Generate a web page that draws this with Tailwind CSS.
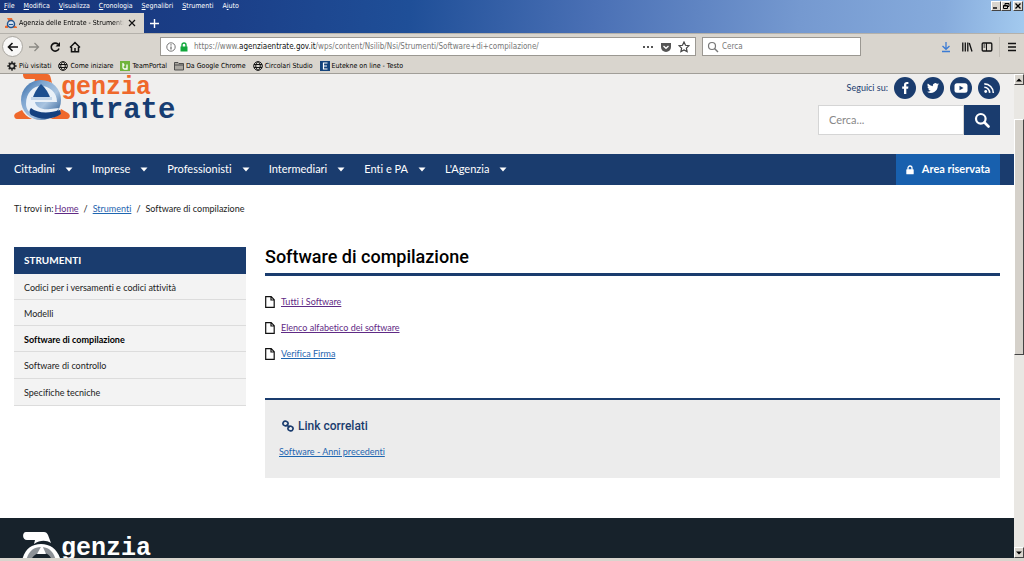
<!DOCTYPE html>
<html lang="it">
<head>
<meta charset="utf-8">
<meta name="viewport" content="width=device-width, initial-scale=1">
<title>Agenzia delle Entrate - Strumenti</title>
<script src="https://cdn.jsdelivr.net/npm/@tailwindcss/browser@4"></script>
</head>
<body class="h-screen flex flex-col overflow-hidden bg-[#d9d5ce] font-['DejaVu_Sans_Condensed','DejaVu_Sans',sans-serif] text-[7px] text-black">

<!-- Menu bar and tabs -->
<div class="shrink-0 bg-[linear-gradient(95deg,#16347a_0%,#1b3f88_22%,#1f4f98_40%,#4a70b5_58%,#7599d0_78%,#86abdc_92%,#a3caef_100%)]">
  <div class="flex justify-between h-[13px]">
    <nav class="flex items-center gap-[9px] pl-1 text-white" aria-label="Menu">
      <button><u>F</u>ile</button>
      <button><u>M</u>odifica</button>
      <button><u>V</u>isualizza</button>
      <button><u>C</u>ronologia</button>
      <button><u>S</u>egnalibri</button>
      <button><u>S</u>trumenti</button>
      <button>A<u>i</u>uto</button>
    </nav>
    <div class="flex pt-px pr-px">
      <button aria-label="Riduci a icona" class="w-[10px] h-[10px] bg-[#d9d5ce] border border-t-white border-l-white border-r-[#444] border-b-[#444]"><svg viewBox="0 0 8 8" class="block size-2"><path d="M1 6h4" stroke="#000" stroke-width="1.4"/></svg></button>
      <button aria-label="Ripristina" class="w-[10px] h-[10px] bg-[#d9d5ce] border border-t-white border-l-white border-r-[#444] border-b-[#444]"><svg viewBox="0 0 8 8" class="block size-2"><path d="M3 3V1.500h4v3H5.500M1.500 3.500h4v3h-4zM1.500 4h4M3 1.700h4" fill="none" stroke="#000"/></svg></button>
      <button aria-label="Chiudi finestra" class="ml-[2px] w-[10px] h-[10px] bg-[#d9d5ce] border border-t-white border-l-white border-r-[#444] border-b-[#444]"><svg viewBox="0 0 8 8" class="block size-2"><path d="M1.500 1.500l5 5M6.500 1.500l-5 5" stroke="#000" stroke-width="1.300"/></svg></button>
    </div>
  </div>
  <div class="flex h-5">
    <div class="flex items-center w-36 bg-[#d9d5ce] pl-[5px]">
      <svg viewBox="0 0 12 12" class="size-3 mr-[2px] shrink-0"><path d="M2 1h5l1 3-4 1zM0 9l3-1v3H0zM9 8l3 2v1H8z" fill="#ee6a2d"/><circle cx="6" cy="7" r="3.500" fill="#dfe9f4" stroke="#24568f" stroke-width="1.500"/><path d="M4 7.500h4" stroke="#24568f" stroke-width="1.200"/></svg>
      <span class="w-[105px] overflow-hidden whitespace-nowrap mask-r-from-90%">Agenzia delle Entrate - Strumenti</span>
      <button aria-label="Chiudi scheda" class="ml-1"><svg viewBox="0 0 8 8" class="size-2"><path d="M1 1l6 6M7 1L1 7" stroke="#111" stroke-width="1.200"/></svg></button>
    </div>
    <button aria-label="Nuova scheda" class="ml-[6px]"><svg viewBox="0 0 9 9" class="size-[9px]"><path d="M4.500 0v9M0 4.500h9" stroke="#fff" stroke-width="1.400"/></svg></button>
  </div>
</div>

<!-- Toolbar -->
<div class="shrink-0 flex items-center h-[26px] border-t border-[#b4b1ab] text-[8px]">
  <div class="flex items-center w-40 pl-[2px]">
    <button aria-label="Indietro" class="flex items-center justify-center size-[21px] rounded-full bg-[#f8f7f6] border border-[#aaa7a1]"><svg viewBox="0 0 12 12" class="size-3"><path d="M11 6H1.500M5.500 2l-4 4 4 4" fill="none" stroke="#111" stroke-width="1.600"/></svg></button>
    <button aria-label="Avanti" class="ml-[5px]"><svg viewBox="0 0 12 12" class="size-3"><path d="M1 6h9.500M6.500 2l4 4-4 4" fill="none" stroke="#8b8984" stroke-width="1.300"/></svg></button>
    <button aria-label="Ricarica" class="ml-[9px]"><svg viewBox="0 0 12 12" class="size-3"><path d="M10 7.500A4 4 0 1 1 9 3.200" fill="none" stroke="#111" stroke-width="1.600"/><path d="M11 1v4.500H6.500z" fill="#111"/></svg></button>
    <button aria-label="Pagina iniziale" class="ml-[8px]"><svg viewBox="0 0 12 12" class="size-3"><path d="M1 6.500L6 1.500l5 5M2.500 6v4.800h7V6M6 10.500V7" fill="none" stroke="#111" stroke-width="1.500"/></svg></button>
  </div>
  <div class="flex items-center w-[536px] h-[19px] bg-white border border-[#9b9892] px-[5px]">
    <svg viewBox="0 0 10 10" class="size-[10px] shrink-0"><circle cx="5" cy="5" r="4.200" fill="none" stroke="#666" stroke-width=".9"/><path d="M5 4.400v3.200M5 2.300v1.200" stroke="#555" stroke-width="1.100"/></svg>
    <svg viewBox="0 0 10 10" class="size-[10px] shrink-0 ml-[3px]"><path d="M1.500 4.500h7v5h-7z" fill="#12a83c"/><path d="M3 5V3a2 2 0 0 1 4 0v2" fill="none" stroke="#12a83c" stroke-width="1.400"/></svg>
    <div role="textbox" contenteditable="true" aria-label="Indirizzo" class="flex-1 ml-[5px] whitespace-nowrap overflow-hidden text-[#777]">https://www.<span class="text-[#111]">agenziaentrate.gov.it</span>/wps/content/Nsilib/Nsi/Strumenti/Software+di+compilazione/</div>
    <button aria-label="Azioni pagina"><svg viewBox="0 0 12 12" class="size-3"><path d="M1 6h2M5 6h2M9 6h2" stroke="#555" stroke-width="2"/></svg></button>
    <button aria-label="Pocket" class="ml-[6px]"><svg viewBox="0 0 12 12" class="size-3"><path d="M1 2h10v4a5 5 0 0 1-10 0z" fill="#555"/><path d="M3.500 5L6 7.300 8.500 5" fill="none" stroke="#fff" stroke-width="1.300"/></svg></button>
    <button aria-label="Aggiungi ai segnalibri" class="ml-[6px]"><svg viewBox="0 0 12 12" class="size-3"><path d="M6 1l1.500 3.300 3.500.4-2.600 2.400.7 3.500L6 8.900l-3.100 1.700.7-3.500L1 4.700l3.500-.4z" fill="none" stroke="#444" stroke-width="1.200"/></svg></button>
  </div>
  <label class="flex items-center ml-[6px] w-[159px] h-[19px] bg-white border border-[#9b9892] pl-1">
    <svg viewBox="0 0 12 12" class="size-3 shrink-0"><circle cx="5" cy="5" r="3.500" fill="none" stroke="#777" stroke-width="1.200"/><path d="M7.500 7.500L11 11" stroke="#777" stroke-width="1.400"/></svg>
    <input aria-label="Cerca nel web" placeholder="Cerca" class="ml-[3px] w-full outline-none placeholder:text-[#777]">
  </label>
  <div class="flex items-center ml-auto pr-[6px]">
    <button aria-label="Download"><svg viewBox="0 0 12 12" class="size-3"><path d="M6 1v7M2.500 5L6 8.300 9.500 5M2 10.500h8" fill="none" stroke="#3b7bd4" stroke-width="1.300"/></svg></button>
    <button aria-label="Libreria" class="ml-[9px]"><svg viewBox="0 0 12 12" class="size-3"><path d="M1.800 1.500v9M4.300 1.500v9M6.800 1.500v9M8.300 2l2.700 8.500" fill="none" stroke="#111" stroke-width="1.300"/></svg></button>
    <button aria-label="Barra laterale" class="ml-[8px]"><svg viewBox="0 0 12 12" class="size-3"><rect x="1.200" y="2" width="9.600" height="8" rx="1" fill="none" stroke="#111" stroke-width="1.300"/><path d="M5.500 2v8M2.500 4h1.800M2.500 6h1.800" stroke="#111"/></svg></button>
    <span class="ml-[6px] w-px h-5 bg-[#c5c1ba]"></span>
    <button aria-label="Apri menu" class="ml-[6px]"><svg viewBox="0 0 12 12" class="size-3"><path d="M2 2.500h8M2 6h8M2 9.500h8" stroke="#111" stroke-width="1.300"/></svg></button>
  </div>
</div>

<!-- Bookmarks -->
<nav class="shrink-0 flex items-center gap-[7px] h-[15px] pl-[7px] border-b border-[#a19e98]" aria-label="Segnalibri">
  <a href="#" class="flex items-center gap-[2px]"><svg viewBox="0 0 10 10" class="size-[10px]"><circle cx="5" cy="5" r="2.600" fill="none" stroke="#222" stroke-width="1.600"/><path d="M5 .3v2M5 7.700v2M.3 5h2M7.700 5h2M1.700 1.700l1.300 1.300M7 7l1.300 1.300M8.300 1.700L7 3M3 7L1.700 8.300" stroke="#222" stroke-width="1.400"/></svg>Più visitati</a>
  <a href="#" class="flex items-center gap-[2px]"><svg viewBox="0 0 10 10" class="size-[10px]"><path d="M5 .7a4.300 4.300 0 1 0 .01 0zM5 .7c-3 2.500-3 6 0 8.600 3-2.500 3-6 0-8.600M1 3.500h8M1 6.500h8" fill="none" stroke="#111"/></svg>Come iniziare</a>
  <a href="#" class="flex items-center gap-[2px]"><svg viewBox="0 0 10 10" class="size-[10px]"><path d="M0 0h10v10H0z" fill="#71b43c"/><path d="M3 2v4.500q0 1.500 1.500 1.500h2.500V3.500M3 4h1.500" fill="none" stroke="#fff" stroke-width="1.300"/></svg>TeamPortal</a>
  <a href="#" class="flex items-center gap-[2px]"><svg viewBox="0 0 10 10" class="size-[10px]"><path d="M.5 9V1.500h3.500l1 1h4.500V9zM.5 4h9" fill="#aaa7a0" stroke="#444" stroke-width=".9"/></svg>Da Google Chrome</a>
  <a href="#" class="flex items-center gap-[2px]"><svg viewBox="0 0 10 10" class="size-[10px]"><path d="M5 .7a4.300 4.300 0 1 0 .01 0zM5 .7c-3 2.500-3 6 0 8.600 3-2.500 3-6 0-8.600M1 3.500h8M1 6.500h8" fill="none" stroke="#111"/></svg>Circolari Studio</a>
  <a href="#" class="flex items-center gap-[2px]"><svg viewBox="0 0 10 10" class="size-[10px]"><path d="M0 0h10v10H0z" fill="#15437b"/><path d="M7.500 2h-4v6h4M3.500 5H7" fill="none" stroke="#fff" stroke-width="1.200"/></svg>Eutekne on line - Testo</a>
</nav>

<div class="flex-1 min-h-0 flex mb-[3px]">
  <!-- Web page -->
  <div class="flex-1 min-w-0 flex flex-col overflow-hidden bg-white font-[Lato,sans-serif] [font-variant-ligatures:none] text-[9px]">
    <header class="shrink-0 flex justify-between h-20 px-[14px] bg-[#f0efee]">
      <a href="#" aria-label="Agenzia Entrate">
        <svg viewBox="0 0 164 54" class="block w-[164px] h-[54px]">
          <defs><linearGradient id="ring" x1="0" y1="0" x2="1" y2="1"><stop offset="0" stop-color="#2a61a0"/><stop offset=".3" stop-color="#7fa6d0"/><stop offset=".6" stop-color="#a9c4e0"/><stop offset="1" stop-color="#164a86"/></linearGradient></defs>
          <path d="M9 0h24c2 0 3 1 3.500 3l1.500 6c-5-2-13-2-18 1l1-5h-8c-3 0-4-2-4-5z" fill="#ef682b"/>
          <path d="M8 36l-6 3c-3 2-2 6 1 6h15c-5-2-8-5-10-9zM47 35l7 4c3 2 2 6-1 6H36c6-2 9-5 11-10z" fill="#ef682b"/>
          <circle cx="27" cy="26" r="20" fill="url(#ring)"/>
          <path d="M12 30c0-11 7-18 15-18s16 6 16 16H21c1 6 8 8 15 7l9-1c-5 8-16 10-24 7-6-2-9-6-9-11z" fill="#eaf1f8"/>
          <path d="M27 10q7 6 10 16H18q3-10 9-16z" fill="#1d4f8f"/>
          <path d="M17 23h21v3H17z" fill="#c3d6ea"/>
          <path d="M17 34c6 5 17 6 29 2l1 4c-8 6-21 6-30 1-2-2-2-5 0-7z" fill="#15417f"/>
          <text x="47" y="20" font-family="'Courier New','Liberation Mono',monospace" font-weight="700" font-size="25" fill="#ef682b">genzia</text>
          <text x="57" y="44" font-family="'Courier New','Liberation Mono',monospace" font-weight="700" font-size="29" fill="#173d72">ntrate</text>
        </svg>
      </a>
      <div class="flex flex-col items-end gap-[6px] pt-[3px]">
        <div class="flex items-center gap-[6px] text-[#1b3c6e]">
          <span>Seguici su:</span>
          <a href="#" aria-label="Facebook" class="flex items-center justify-center size-[22px] rounded-full bg-[#1a3c6e]"><svg viewBox="0 0 12 12" class="size-3"><path d="M5 12V6.700H3.200V4.500H5V3c0-2 1.200-2.900 2.900-2.900h1.500v2H8.200c-.7 0-.9.400-.9 1v1.400h2.100l-.3 2.200H7.300V12z" fill="#fff"/></svg></a>
          <a href="#" aria-label="Twitter" class="flex items-center justify-center size-[22px] rounded-full bg-[#1a3c6e]"><svg viewBox="0 0 24 24" class="size-3"><path d="M24 4.600a10 10 0 0 1-2.800.8 5 5 0 0 0 2.100-2.700 10 10 0 0 1-3.100 1.200 4.900 4.900 0 0 0-8.400 4.500A14 14 0 0 1 1.700 3.200a4.900 4.900 0 0 0 1.500 6.500 5 5 0 0 1-2.200-.6 4.900 4.900 0 0 0 3.900 4.900 5 5 0 0 1-2.200.1 4.900 4.900 0 0 0 4.600 3.400A10 10 0 0 1 0 19.500 14 14 0 0 0 21.500 7.100 10 10 0 0 0 24 4.600z" fill="#fff"/></svg></a>
          <a href="#" aria-label="YouTube" class="flex items-center justify-center size-[22px] rounded-full bg-[#1a3c6e]"><svg viewBox="0 0 14 12" class="w-[14px] h-3"><rect x=".5" y="1.200" width="13" height="9.600" rx="2.500" fill="#fff"/><path d="M5.500 3.800v4.400L9.500 6z" fill="#1a3c6e"/></svg></a>
          <a href="#" aria-label="RSS" class="flex items-center justify-center size-[22px] rounded-full bg-[#1a3c6e]"><svg viewBox="0 0 12 12" class="size-3"><circle cx="2.700" cy="9.500" r="1.400" fill="#fff"/><path d="M1.300 5.300a5.300 5.300 0 0 1 5.300 5.600M1.300 1.900a9 9 0 0 1 9 9" fill="none" stroke="#fff" stroke-width="1.600"/></svg></a>
        </div>
        <form class="flex h-[30px]">
          <input aria-label="Cerca nel sito" placeholder="Cerca..." class="w-[146px] bg-white border border-[#d5d5d5] px-[10px] text-[11px] outline-none placeholder:text-[#888]">
          <button type="button" aria-label="Cerca" class="flex items-center justify-center w-9 bg-[#1a3c6e]"><svg viewBox="0 0 16 16" class="size-4"><circle cx="6.800" cy="6.800" r="4.800" fill="none" stroke="#fff" stroke-width="2.200"/><path d="M10.500 10.500l4 4" stroke="#fff" stroke-width="2.600" stroke-linecap="round"/></svg></button>
        </form>
      </div>
    </header>

    <nav class="shrink-0 flex h-[31px] px-[14px] bg-[#1a3c6e] text-white text-[11px]" aria-label="Principale">
      <div class="flex gap-[19px]">
        <button class="flex items-center gap-[10px]">Cittadini <svg viewBox="0 0 8 5" class="w-2 h-[5px]"><path d="M.5.500h7L4 4.500z" fill="#fff"/></svg></button>
        <button class="flex items-center gap-[10px]">Imprese <svg viewBox="0 0 8 5" class="w-2 h-[5px]"><path d="M.5.500h7L4 4.500z" fill="#fff"/></svg></button>
        <button class="flex items-center gap-[10px]">Professionisti <svg viewBox="0 0 8 5" class="w-2 h-[5px]"><path d="M.5.500h7L4 4.500z" fill="#fff"/></svg></button>
        <button class="flex items-center gap-[10px]">Intermediari <svg viewBox="0 0 8 5" class="w-2 h-[5px]"><path d="M.5.500h7L4 4.500z" fill="#fff"/></svg></button>
        <button class="flex items-center gap-[10px]">Enti e PA <svg viewBox="0 0 8 5" class="w-2 h-[5px]"><path d="M.5.500h7L4 4.500z" fill="#fff"/></svg></button>
        <button class="flex items-center gap-[10px]">L'Agenzia <svg viewBox="0 0 8 5" class="w-2 h-[5px]"><path d="M.5.500h7L4 4.500z" fill="#fff"/></svg></button>
      </div>
      <a href="#" class="ml-auto flex items-center justify-center gap-2 w-[104px] bg-[#1860ae] font-bold"><svg viewBox="0 0 8 10" class="w-2 h-[10px]"><rect x=".3" y="4.300" width="7.400" height="5" rx=".6" fill="#fff"/><path d="M2 4.800V3a2 2 0 0 1 4 0v1.800" fill="none" stroke="#fff" stroke-width="1.300"/></svg>Area riservata</a>
    </nav>

    <div class="shrink-0 flex items-center gap-[5px] h-12 px-[14px] text-[#222]">
      <div class="flex gap-px"><span>Ti trovi in:</span><a href="#" class="underline text-[#5f2a85]">Home</a></div><span>/</span>
      <a href="#" class="underline text-[#1f66b0]">Strumenti</a><span>/</span><span>Software di compilazione</span>
    </div>

    <div class="shrink-0 flex items-start gap-[19px] px-[14px] pt-[14px] pb-10">
      <aside class="w-[232px] shrink-0 bg-[#f3f3f3] text-[#222]">
        <h2 class="flex items-center h-[27px] pl-[10px] bg-[#1a3c6e] text-white text-[10px] font-bold">STRUMENTI</h2>
        <ul>
          <li><a href="#" class="flex items-center h-[26px] pl-[10px] pt-[2px] border-b border-[#dcdcdc]">Codici per i versamenti e codici attività</a></li>
          <li><a href="#" class="flex items-center h-[26px] pl-[10px] pt-[2px] border-b border-[#dcdcdc]">Modelli</a></li>
          <li><a href="#" class="flex items-center h-[26px] pl-[10px] pt-[2px] border-b border-[#dcdcdc] font-bold text-black">Software di compilazione</a></li>
          <li><a href="#" class="flex items-center h-[27px] pl-[10px] pt-[2px] border-b border-[#dcdcdc]">Software di controllo</a></li>
          <li><a href="#" class="flex items-center h-[27px] pl-[10px] pt-[2px] border-b border-[#dcdcdc]">Specifiche tecniche</a></li>
        </ul>
      </aside>
      <main class="flex-1 min-w-0">
        <h1 class="h-[29px] pb-[7px] flex items-center border-b-3 border-[#1a3c6e] font-[Roboto,sans-serif] text-[18px] font-medium">Software di compilazione</h1>
        <ul class="pt-[13px] pb-[31px] text-[#5f2a85]">
          <li class="flex items-center gap-[6px] h-[26px]"><svg viewBox="0 0 10 12" class="w-[10px] h-3"><path d="M.7.700h5.500l3 3v7.600H.7zM6 .7v3.300h3.300" fill="none" stroke="#111" stroke-width="1.200"/></svg><a href="#" class="underline">Tutti i Software</a></li>
          <li class="flex items-center gap-[6px] h-[26px]"><svg viewBox="0 0 10 12" class="w-[10px] h-3"><path d="M.7.700h5.500l3 3v7.600H.7zM6 .7v3.300h3.300" fill="none" stroke="#111" stroke-width="1.200"/></svg><a href="#" class="underline">Elenco alfabetico dei software</a></li>
          <li class="flex items-center gap-[6px] h-[26px]"><svg viewBox="0 0 10 12" class="w-[10px] h-3"><path d="M.7.700h5.500l3 3v7.600H.7zM6 .7v3.300h3.300" fill="none" stroke="#111" stroke-width="1.200"/></svg><a href="#" class="underline text-[#1f66b0]">Verifica Firma</a></li>
        </ul>
        <section class="h-20 border-t-2 border-[#1a3c6e] bg-[#ececec] px-[14px] pt-4">
          <h2 class="flex items-center gap-1 pl-[3px] h-5 font-[Roboto,sans-serif] text-[12px] font-medium text-[#1a3c6e]"><svg viewBox="0 0 12 12" class="size-3"><g fill="none" stroke="#1a3c6e" stroke-width="1.700"><rect x="1" y="1.200" width="5" height="4.600" rx="2.200" transform="rotate(20 3.500 3.500)"/><rect x="6" y="6.200" width="5" height="4.600" rx="2.200" transform="rotate(20 8.500 8.500)"/><path d="M4.500 4.500l3 3"/></g></svg>Link correlati</h2>
          <a href="#" class="block pt-[9px] underline text-[#1f66b0]">Software - Anni precedenti</a>
        </section>
      </main>
    </div>

    <footer class="flex-1 min-h-0 overflow-hidden px-[22px] pt-[13px] bg-[#17222b]">
      <svg viewBox="0 0 140 40" class="block w-[140px] h-10" role="img" aria-label="Agenzia">
        <path d="M4 1h18c2 0 3 1 4 3l3 8c-5-3-11-3-17 1l1-4H5C0 9 0 1 4 1z" fill="#fff"/>
        <path d="M0 30c2-11 9-17 19-17s17 6 20 17z" fill="#fff"/>
        <path d="M4 30c2-9 7-14 15-14s13 5 15 14z" fill="#8d9297"/>
        <path d="M9 30c1-5 5-8 11-8s9 3 10 8z" fill="#17222b"/>
        <path d="M20 14l-5 9h9z" fill="#fff"/>
        <text x="39" y="24" font-family="'Courier New','Liberation Mono',monospace" font-weight="700" font-size="25" fill="#fff">genzia</text>
      </svg>
    </footer>
  </div>

  <!-- Scrollbar -->
  <div class="w-[10px] shrink-0 flex flex-col bg-[#e9e7e3]">
    <button aria-label="Scorri su" class="flex items-center justify-center h-[11px] bg-[#d9d5ce] border border-t-white border-l-white border-r-[#444] border-b-[#444]"><svg viewBox="0 0 6 4" class="w-[6px] h-1"><path d="M0 3.500h6L3 .5z"/></svg></button>
    <div class="flex-1 pt-[34px]"><div class="h-[236px] bg-[#d5d1ca] border border-t-white border-l-white border-r-[#444] border-b-[#444]"></div></div>
    <button aria-label="Scorri giù" class="flex items-center justify-center h-[11px] bg-[#d9d5ce] border border-t-white border-l-white border-r-[#444] border-b-[#444]"><svg viewBox="0 0 6 4" class="w-[6px] h-1"><path d="M0 .5h6L3 3.500z"/></svg></button>
  </div>
</div>
</body>
</html>
